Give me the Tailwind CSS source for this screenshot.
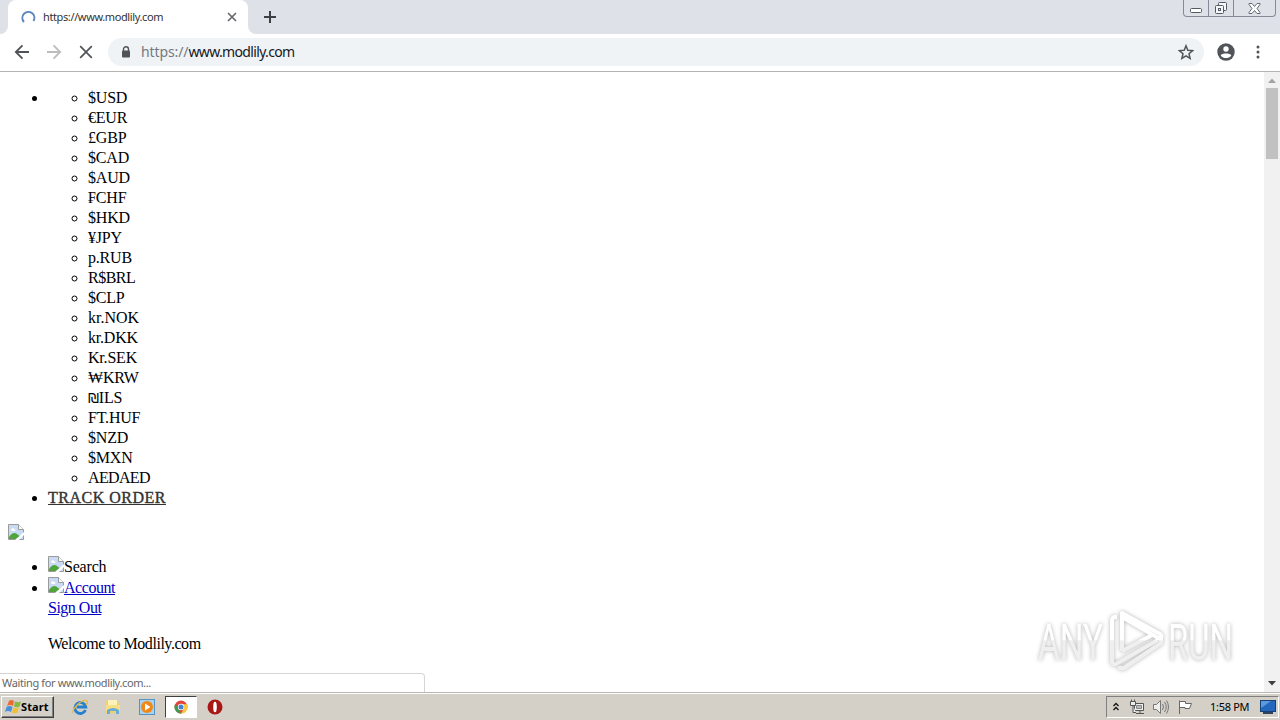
<!DOCTYPE html>
<html lang="en">

<head>
  <title>https://www.modlily.com</title>
  <meta charset="UTF-8">
  <meta name="viewport" content="width=device-width, initial-scale=1.0">
  <script src="https://cdn.jsdelivr.net/npm/@tailwindcss/browser@4"></script>
</head>

<body class="relative flex h-screen flex-col overflow-hidden bg-white font-['Noto_Sans','Open_Sans',sans-serif]">

  <!-- tab strip -->
  <header class="flex h-[34px] shrink-0 items-start bg-[#dee1e8]">
    <div class="flex h-full w-2 items-end bg-white"><div class="h-full w-full rounded-br-lg bg-[#dee1e8]"></div></div>
    <div class="flex h-full w-60 items-center rounded-t-lg bg-white pl-[13px] pr-[11px]">
      <svg class="size-[15px]" viewBox="0 0 15 15" fill="none" stroke="#5a86bd" stroke-width="2"><path d="M3 12A6 6 0 1 1 12.500 11"/></svg>
      <span class="ml-[7px] flex-1 whitespace-nowrap text-[11px] leading-5 tracking-[-0.38px] text-[#333]">https://www.modlily.com</span>
      <svg class="size-[10px]" viewBox="0 0 10 10" stroke="#66696d" stroke-width="1.700"><path d="M1 1l8 8M9 1l-8 8"/></svg>
    </div>
    <div class="h-full w-2 bg-white"><div class="h-full w-full rounded-bl-lg bg-[#dee1e8]"></div></div>
    <svg class="mt-[11px] ml-2 size-3" viewBox="0 0 12 12" stroke="#3c4043" stroke-width="2"><path d="M6 0v12M0 6h12"/></svg>
    <div class="ml-auto mr-[4px] flex h-[17px] w-[93px] rounded-b border border-t-0 border-[#858b96]">
      <div class="flex w-[25px] justify-center border-r border-[#858b96]">
        <svg class="mt-px size-[13px]" viewBox="0 0 13 13" fill="#fff" stroke="#555b66"><rect x=".5" y="7.500" width="11" height="4" rx="1"/></svg>
      </div>
      <div class="flex w-[25px] justify-center border-r border-[#858b96]">
        <svg class="mt-px size-[14px]" viewBox="0 0 14 14" fill="#f5f6f8" stroke="#555b66"><rect x="4.500" y="1.500" width="8" height="8" rx="1"/><rect x="1.500" y="4.500" width="8" height="8" rx="1"/><rect x="4.500" y="7.500" width="2" height="2"/></svg>
      </div>
      <div class="flex flex-1 justify-center">
        <svg class="mt-[3px] h-[11px] w-[13px]" viewBox="0 0 13 11" fill="#fff" stroke="#555b66" stroke-width=".9"><path d="M1 .5h3l2.500 3 2.500-3h3v1l-3 4 3 4v1H9l-2.500-3-2.500 3H1v-1l3-4-3-4z"/></svg>
      </div>
    </div>
  </header>

  <!-- toolbar -->
  <nav class="flex h-[38px] shrink-0 items-center border-b border-[#b3b3b3] bg-white pb-px">
    <svg class="ml-[14px] size-4" viewBox="0 0 16 16" fill="none" stroke="#505357" stroke-width="1.800"><path d="M15 8H2M8.500 1.300L1.800 8l6.700 6.700"/></svg>
    <svg class="ml-4 size-4" viewBox="0 0 16 16" fill="none" stroke="#bbbcbe" stroke-width="1.800"><path d="M1 8h13M7.500 1.300L14.200 8l-6.700 6.700"/></svg>
    <svg class="ml-[17px] size-[14px]" viewBox="0 0 14 14" stroke="#505357" stroke-width="1.700"><path d="M1.200 1.200l11.600 11.600M12.800 1.200L1.200 12.800"/></svg>
    <div class="ml-[15px] flex h-7 w-[1096px] items-center rounded-full bg-[#f0f3f6] pl-[13px] pr-[10px]">
      <svg class="h-3 w-[10px]" viewBox="0 0 10 12"><path d="M2.500 5V3.200a2.500 2.500 0 0 1 5 0V5" fill="none" stroke="#505357" stroke-width="1.400"/><rect x="1" y="4.500" width="8" height="7" rx="1" fill="#505357"/></svg>
      <span class="ml-[10px] whitespace-nowrap text-[14px] leading-6 tracking-[-0.65px] text-[#15181c]"><span class="tracking-[-0.1px] text-[#747980]">https://</span>www.modlily.com</span>
      <svg class="ml-auto size-4" viewBox="0 0 16 16" fill="none" stroke="#505357" stroke-width="1.500"><path d="M8 1.800l1.800 4.400 4.800.4-3.600 3.100 1.100 4.600L8 11.800l-4.100 2.500L5 9.700 1.400 6.600l4.800-.4z"/></svg>
    </div>
    <svg class="ml-[13px] size-[18px]" viewBox="0 0 18 18"><circle cx="9" cy="9" r="8.700" fill="#505357"/><circle cx="9" cy="6" r="2.700" fill="#fff"/><path d="M3.700 12.400C4.500 9.900 13.500 9.900 14.300 12.400C11.700 16 6.300 16 3.700 12.400z" fill="#fff"/></svg>
    <svg class="ml-[21px] h-[14px] w-1" viewBox="0 0 4 14" fill="#505357"><circle cx="2" cy="2" r="1.500"/><circle cx="2" cy="7" r="1.500"/><circle cx="2" cy="12" r="1.500"/></svg>
  </nav>

  <!-- unstyled page -->
  <div class="flex min-h-0 flex-1">
    <main class="flex-1 overflow-hidden px-2 pt-4 font-['Liberation_Serif',serif] text-base leading-5 text-black">
      <ul class="list-disc pl-10">
        <li>
          <ul class="list-[circle] pl-10 tracking-[-0.2px]">
            <li>$USD</li>
            <li>€EUR</li>
            <li>£GBP</li>
            <li>$CAD</li>
            <li>$AUD</li>
            <li>₣CHF</li>
            <li>$HKD</li>
            <li>¥JPY</li>
            <li>p.RUB</li>
            <li class="tracking-[-0.5px]">R$BRL</li>
            <li>$CLP</li>
            <li class="tracking-normal">kr.NOK</li>
            <li>kr.DKK</li>
            <li>Kr.SEK</li>
            <li>₩KRW</li>
            <li class="h-5"><span class="font-['DejaVu_Sans'] text-[14px] leading-none">₪</span>ILS</li>
            <li>FT.HUF</li>
            <li>$NZD</li>
            <li>$MXN</li>
            <li class="tracking-[-0.65px]">AEDAED</li>
          </ul>
        </li>
        <li><a class="tracking-[0.5px] text-[#333] underline [-webkit-text-stroke:0.4px_#333]">TRACK ORDER</a></li>
      </ul>
      <svg class="mt-4 size-4" viewBox="0 0 16 16"><path d="M.5.500h10l5 5v10H.5z" fill="#c8daf4" stroke="#9a9a9a"/><path d="M1 15v-2c3-5 7-5 9-2l2 1-4 3z" fill="#4fa53b"/><path d="M3 6c0-2 3-2 3-1 2 0 2 2 0 2H4z" fill="#fff"/><path d="M10.500.500v5h5" fill="#fff" stroke="#9a9a9a"/><path d="M16 8v3l-5 5H7z" fill="#fff"/></svg>
      <ul class="mt-4 list-disc pl-10">
        <li class="h-[21px] tracking-[-0.2px]"><svg class="inline size-4 align-baseline" viewBox="0 0 16 16"><path d="M.5.500h10l5 5v10H.5z" fill="#c8daf4" stroke="#9a9a9a"/><path d="M1 15v-2c3-5 7-5 9-2l2 1-4 3z" fill="#4fa53b"/><path d="M3 6c0-2 3-2 3-1 2 0 2 2 0 2H4z" fill="#fff"/><path d="M10.500.500v5h5" fill="#fff" stroke="#9a9a9a"/><path d="M16 8v3l-5 5H7z" fill="#fff"/></svg>Search</li>
        <li>
          <a class="block h-[21px] tracking-[-0.45px] text-[#0000c8] underline"><svg class="inline size-4 align-baseline" viewBox="0 0 16 16"><path d="M.5.500h10l5 5v10H.5z" fill="#c8daf4" stroke="#9a9a9a"/><path d="M1 15v-2c3-5 7-5 9-2l2 1-4 3z" fill="#4fa53b"/><path d="M3 6c0-2 3-2 3-1 2 0 2 2 0 2H4z" fill="#fff"/><path d="M10.500.500v5h5" fill="#fff" stroke="#9a9a9a"/><path d="M16 8v3l-5 5H7z" fill="#fff"/></svg>Account</a>
          <a class="block tracking-[-0.5px] text-[#0000c8] underline">Sign Out</a>
          <p class="mt-4 tracking-[-0.45px]">Welcome to Modlily.com</p>
        </li>
      </ul>
    </main>

    <!-- scrollbar -->
    <div class="flex w-4 flex-col items-center bg-[#f1f1f1]">
      <svg class="h-4 w-4 shrink-0" viewBox="0 0 16 16"><path d="M4 11l4-4.500 4 4.500z" fill="#a3a3a3"/></svg>
      <div class="h-[71px] w-3 bg-[#c1c1c1]"></div>
      <svg class="mt-auto mb-px h-4 w-4 shrink-0" viewBox="0 0 16 16"><path d="M4 6l4 4.500L12 6z" fill="#404040"/></svg>
    </div>
  </div>

  <!-- status bubble -->
  <div class="absolute bottom-[28px] left-0 flex h-[19px] w-[425px] items-center rounded-tr border-t border-r border-[#d5d5d5] bg-white pl-[2px]">
    <span class="whitespace-nowrap text-[11px] leading-[18px] tracking-[-0.37px] text-[#666]">Waiting for www.modlily.com...</span>
  </div>

  <!-- watermark -->
  <svg class="absolute top-[605px] left-[1030px] h-[72px] w-[210px] overflow-visible drop-shadow-[0_0_2px_rgba(0,0,0,0.3)]" viewBox="0 0 210 72">
    <defs><linearGradient id="fade" gradientUnits="userSpaceOnUse" x1="0" y1="0" x2="0" y2="72"><stop offset=".48" stop-color="#fff"/><stop offset=".5" stop-color="#efefef"/></linearGradient></defs>
    <g font-family="Roboto, sans-serif" font-size="50" fill="url(#fade)">
      <text x="8" y="55" textLength="65" lengthAdjust="spacingAndGlyphs">ANY</text>
      <text x="138" y="55" textLength="65" lengthAdjust="spacingAndGlyphs">RUN</text>
    </g>
    <g fill="none" stroke="url(#fade)" stroke-width="4" stroke-linejoin="round">
      <path d="M87 12h-3q-2 1-2 4v40q0 4 4 3L128 35"/>
      <path d="M92 46V8l38 21q3 3 0 5L92 12M92 46l30-16M131 33v5L94 63q-4 1-5-2"/>
    </g>
  </svg>

  <!-- taskbar -->
  <footer class="flex h-7 shrink-0 items-center border-t border-[#b8b5ae] bg-[#d4d0c8] pl-px shadow-[inset_0_1px_#fff]">
    <div class="flex h-[22px] w-[53px] items-center border border-t-white border-r-[#404040] border-b-[#404040] border-l-white pl-[3px] shadow-[inset_-1px_-1px_#808080]">
      <svg class="size-4 shrink-0" viewBox="0 0 16 16"><path d="M4 2q2-2 5 0L8 7Q5 5 2 7z" fill="#ef6a32"/><path d="M10 2.500q3 1.500 6 0l-1.500 5Q12 9 9 7.500z" fill="#84b944"/><path d="M1.500 8q3-2 6 0L6 13Q3 11 0 13z" fill="#4a91d9"/><path d="M8.500 8.500q3 1.500 5.500 0L12.500 13.500Q9.500 15 7 13.500z" fill="#f5bd32"/></svg>
      <span class="text-[11px] leading-5 font-bold tracking-[0.1px] text-black">Start</span>
    </div>
    <svg class="ml-[18px] size-4" viewBox="0 0 16 16" fill="none"><path d="M13.500 11A5.500 5.500 0 1 1 13.800 8H5" stroke="#2680d0" stroke-width="2.800"/><path d="M1.500 14C-1 11 10-1 15 2c1 1 0 3-1 4" stroke="#e8b93b" stroke-width="1.300"/></svg>
    <svg class="ml-[17px] size-4" viewBox="0 0 16 16"><path d="M1 2h5l1 2h7v10H1z" fill="#efd16c"/><path d="M3 1h9v5H3z" fill="#fff2b8"/><path d="M1 6h14v6H1z" fill="#f7df88"/><path d="M2 15v-4q6-4 12 0v4h-3v-3H5v3z" fill="#69add6"/></svg>
    <svg class="ml-[18px] size-4" viewBox="0 0 16 16"><rect x=".5" y=".5" width="15" height="15" fill="#a9d2ef" stroke="#5594c2"/><circle cx="8" cy="8" r="6" fill="#ef8817"/><path d="M6 4.500L11.500 8 6 11.500z" fill="#fff"/></svg>
    <div class="ml-[10px] flex h-[22px] w-8 items-center justify-center border border-t-[#404040] border-r-white border-b-white border-l-[#404040] bg-white">
      <svg class="size-[14px]" viewBox="0 0 14 14"><circle cx="7" cy="7" r="6.500" fill="#e1453a"/><path d="M1.300 3.800L4.300 9 7 13.500A6.500 6.500 0 0 1 1.300 3.800z" fill="#3a9c50"/><path d="M13 4.200H7L9.700 9 7 13.500A6.500 6.500 0 0 0 13 4.200z" fill="#f7cb3f"/><circle cx="7" cy="7" r="3.200" fill="#fff"/><circle cx="7" cy="7" r="2.500" fill="#4580d8"/></svg>
    </div>
    <svg class="ml-[10px] size-4" viewBox="0 0 16 16"><circle cx="8" cy="8" r="7.500" fill="#a81716"/><ellipse cx="8" cy="8" rx="1.800" ry="5.300" fill="#fff"/></svg>

    <div class="mr-px ml-auto flex h-[22px] w-[173px] items-center border border-t-[#808080] border-r-white border-b-white border-l-[#808080] pl-[6px]">
      <svg class="h-[10px] w-[6px]" viewBox="0 0 6 10" fill="none" stroke="#111" stroke-width="1.300"><path d="M.5 4L3 1.500 5.500 4M.5 8L3 5.500 5.500 8"/></svg>
      <svg class="ml-[10px] size-4" viewBox="0 0 16 16" fill="#eee" stroke="#555"><path d="M5.500 4.500h9v7h-9z"/><path d="M7.500 6.500h5v3h-5z" fill="#bbb" stroke="#888"/><path d="M7 14.500h8M11 12v2M1.500 2.500h5v4h-5zM2.500.500v2M5.500.500v2M4 6.500v7h3"/></svg>
      <svg class="ml-2 size-4" viewBox="0 0 16 16" fill="none" stroke="#777"><path d="M.500 5.500h3l4-4v13l-4-4h-3z" fill="#eee"/><path d="M9.500 5q2 3 0 6M11.500 3q3.500 5 0 10M13.500 1.500q4 6.500 0 13"/></svg>
      <svg class="ml-2 size-4" viewBox="0 0 16 16" fill="#fff" stroke="#666"><path d="M2.500 15V1.500"/><path d="M2.500 2.500h6v2h6l-2 5H8v-1H2.500z"/></svg>
      <span class="ml-[17px] w-[39px] text-[11px] leading-5 tracking-[-0.3px] whitespace-nowrap text-black">1:58 PM</span>
      <svg class="ml-[11px] h-[14px] w-4" viewBox="0 0 16 14"><rect x=".5" y=".5" width="15" height="11" fill="#2467bd" stroke="#174176"/><path d="M1 1h10L1 8z" fill="#5c9ae0"/><path d="M3 13h10" stroke="#31435c" stroke-width="2"/></svg>
    </div>
  </footer>

</body>
</html>
